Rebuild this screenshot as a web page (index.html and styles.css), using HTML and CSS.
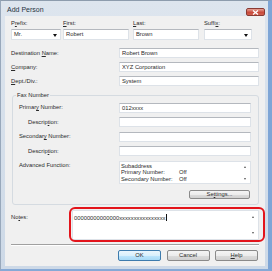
FILE: index.html
```html
<!DOCTYPE html>
<html lang="en">
<head>
    <meta charset="UTF-8">
    <title>Add Person</title>
    <link rel="stylesheet" href="styles.css">
</head>
<body>

<div class="window">
    <div class="titlebar">
        <span class="title">Add Person</span>
        <span class="close-btn">
            <svg width="7" height="5" viewBox="0 0 7 5"><path d="M1 0.5 L6 4.5 M6 0.5 L1 4.5" stroke="#fff" stroke-width="1.3"/></svg>
        </span>
    </div>

    <div class="client">
        <div class="name-row">
            <div class="field field-prefix">
                <label>P<u>r</u>efix:</label>
                <div class="combo">Mr.<span class="arrow"></span></div>
            </div>
            <div class="field field-first">
                <label><u>F</u>irst:</label>
                <div class="textbox">Robert</div>
            </div>
            <div class="field field-last">
                <label><u>L</u>ast:</label>
                <div class="textbox">Brown</div>
            </div>
            <div class="field field-suffix">
                <label>Suffi<u>x</u>:</label>
                <div class="combo"><span class="arrow"></span></div>
            </div>
        </div>

        <div class="rows">
            <div class="row">
                <label>Destination <u>N</u>ame:</label>
                <div class="textbox">Robert Brown</div>
            </div>
            <div class="row">
                <label><u>C</u>ompany:</label>
                <div class="textbox">XYZ Corporation</div>
            </div>
            <div class="row">
                <label><u>D</u>ept./Div.:</label>
                <div class="textbox">System</div>
            </div>
        </div>

        <div class="group">
            <span class="group-title">Fax Number</span>
            <div class="group-rows">
                <div class="row">
                    <label>Primar<u>y</u> Number:</label>
                    <div class="textbox">012xxxx</div>
                </div>
                <div class="row">
                    <label class="sub">Descrip<u>t</u>ion:</label>
                    <div class="textbox"></div>
                </div>
                <div class="row">
                    <label>Secondar<u>y</u> Number:</label>
                    <div class="textbox"></div>
                </div>
                <div class="row">
                    <label class="sub">Descrip<u>t</u>ion:</label>
                    <div class="textbox"></div>
                </div>
            </div>
            <div class="row row-adv">
                <label>Advanced Function:</label>
                <div class="listbox">
                    <div class="list-lines">
                        <span class="wide">Subaddress</span>
                        <span>Primary Number:</span><span>Off</span>
                        <span>Secondary Number:</span><span>Off</span>
                    </div>
                    <div class="scroll">
                        <span class="up"></span>
                        <span class="down"></span>
                    </div>
                </div>
            </div>
            <div class="group-actions">
                <button class="btn btn-settings">Se<u>t</u>tings...</button>
            </div>
        </div>

        <div class="notes-row">
            <label>No<u>t</u>es:</label>
            <div class="notes">
                <span class="notes-text">00000000000000xxxxxxxxxxxxxxxx<span class="caret"></span></span>
                <div class="scroll">
                    <span class="up"></span>
                    <span class="down"></span>
                </div>
            </div>
        </div>

        <div class="separator"></div>

        <div class="actions">
            <button class="btn btn-default">OK</button>
            <button class="btn">Cancel</button>
            <button class="btn"><u>H</u>elp</button>
        </div>
    </div>
</div>

</body>
</html>
```

FILE: styles.css
```css
body {
    margin: 0;
    font-family: "Liberation Sans", Arial, sans-serif;
    font-size: 5.8px;
    color: #2a2a2a;
    background: #fff;
}
.window {
    width: 272px;
    height: 271px;
    box-sizing: border-box;
    display: flex;
    flex-direction: column;
    background: linear-gradient(#dde5ee, #cdd9e7);
    border-top: 1px solid #8d9cad;
    border-left: 1px solid #98a8bb;
    border-right: 4px solid #7ea5d6;
    border-bottom: 2px solid #86a9d6;
}
.titlebar {
    height: 17px;
    display: flex;
    align-items: center;
    justify-content: space-between;
    padding: 0 3px 0 6px;
}
.title {
    font-size: 7px;
    color: #27333f;
    margin-top: 1px;
}
.close-btn {
    width: 19px;
    height: 8px;
    box-sizing: border-box;
    margin-top: 7px;
    display: flex;
    align-items: center;
    justify-content: center;
    border: 1px solid #8a3a33;
    border-radius: 2px;
    background: linear-gradient(#e6a497, #c94a3c 55%, #d0614f);
}
.client {
    flex: 1;
    margin: 0 3px 4px 4px;
    padding: 4px 6px 5px 6px;
    background: #f0f0f0;
    display: flex;
    flex-direction: column;
}
label {
    line-height: 7px;
    white-space: nowrap;
}
.textbox, .combo {
    box-sizing: border-box;
    background: #fff;
    border: 1px solid #dde2e8;
    border-top-color: #b4b8be;
    padding: 0 2px;
    line-height: 8px;
    white-space: nowrap;
    overflow: hidden;
}

/* name row */
.name-row {
    display: flex;
}
.field {
    display: flex;
    flex-direction: column;
    gap: 2px;
}
.field .textbox, .field .combo {
    height: 11px;
    line-height: 9px;
}
.field-prefix { width: 50px; margin-right: 2px; }
.field-first { width: 66px; margin-right: 4px; }
.field-last { width: 66px; margin-right: 5px; }
.field-suffix { width: 48px; }
.combo {
    display: flex;
    justify-content: space-between;
    align-items: center;
    padding-right: 3px;
}
.combo .arrow {
    margin-left: auto;
    border-left: 2.5px solid transparent;
    border-right: 2.5px solid transparent;
    border-top: 3px solid #111;
    margin-top: 2px;
}

/* label + input rows */
.rows {
    display: flex;
    flex-direction: column;
    gap: 4px;
    margin-top: 8px;
}
.row {
    display: grid;
    grid-template-columns: 108px 1fr;
    align-items: center;
}
.row .textbox {
    height: 10px;
}

/* fax group */
.group {
    margin: 9px 0 0 1px;
    padding: 0 7px 5px 6px;
    border: 1px solid #d5dbe1;
    border-radius: 3px;
    display: flex;
    flex-direction: column;
}
.group-title {
    align-self: flex-start;
    margin: -4.5px 0 4px -3px;
    padding: 0 1px;
    line-height: 7px;
    background: #f0f0f0;
}
.group-rows {
    display: flex;
    flex-direction: column;
    gap: 4.5px;
}
.group .row {
    grid-template-columns: 100px 1fr;
}
.group .sub {
    padding-left: 9px;
}
.row-adv {
    margin-top: 5px;
    align-items: start;
}
.row-adv label {
    margin-top: 1px;
}
.listbox {
    height: 23px;
    box-sizing: border-box;
    background: #fff;
    border: 1px solid #dde2e8;
    display: flex;
}
.list-lines {
    flex: 1;
    display: grid;
    grid-template-columns: 58px auto;
    align-content: start;
    padding: 0.5px 0 0 1px;
    line-height: 6.5px;
}
.list-lines .wide {
    grid-column: 1 / 3;
}
.scroll {
    width: 10px;
    display: flex;
    flex-direction: column;
    align-items: center;
    justify-content: space-between;
    padding: 4px 0 3px;
}
.scroll .up, .scroll .down {
    border-left: 1.5px solid transparent;
    border-right: 1.5px solid transparent;
}
.scroll .up {
    border-bottom: 2px solid #555;
}
.scroll .down {
    border-top: 2px solid #555;
}
.group-actions {
    display: flex;
    justify-content: flex-end;
    margin-top: 6px;
    padding-right: 1px;
}

/* buttons */
.btn {
    font-family: inherit;
    font-size: 5.8px;
    color: #2a2a2a;
    height: 11px;
    width: 43px;
    padding: 0;
    line-height: 9px;
    border: 1px solid #8a8a8a;
    border-radius: 2px;
    background: linear-gradient(#f4f4f4, #ececec 50%, #dcdcdc 51%, #d0d0d0);
}
.btn-settings {
    width: 61px;
    height: 9px;
    line-height: 7px;
}
.btn-default {
    border-color: #3d7bad;
    background: linear-gradient(#eaf6fd, #d9f0fc 50%, #bee6fd 51%, #a7d9f5);
}

/* notes */
.notes-row {
    display: grid;
    grid-template-columns: 61px 1fr;
    align-items: start;
    margin-top: 5px;
}
.notes-row label {
    margin-top: 3.5px;
}
.notes {
    position: relative;
    height: 28px;
    background: #fff;
    border: 1px solid #dde2e8;
    display: flex;
}
.notes::after {
    content: "";
    position: absolute;
    top: -4px;
    left: -4px;
    right: -7px;
    bottom: -3px;
    border: 2.5px solid #e3141b;
    border-radius: 6px;
}
.notes-text {
    flex: 1;
    padding: 3px 0 0 1px;
    line-height: 7px;
    white-space: nowrap;
}
.caret {
    display: inline-block;
    width: 1px;
    height: 7px;
    background: #111;
    vertical-align: -1px;
}
.notes .scroll {
    padding: 5px 0 5px;
}

.separator {
    margin-top: 4px;
    border-top: 1px solid #a0a0a0;
    border-bottom: 1px solid #fff;
}
.actions {
    display: flex;
    justify-content: flex-end;
    gap: 5.5px;
    margin-top: 4px;
    padding-right: 1px;
}
```
